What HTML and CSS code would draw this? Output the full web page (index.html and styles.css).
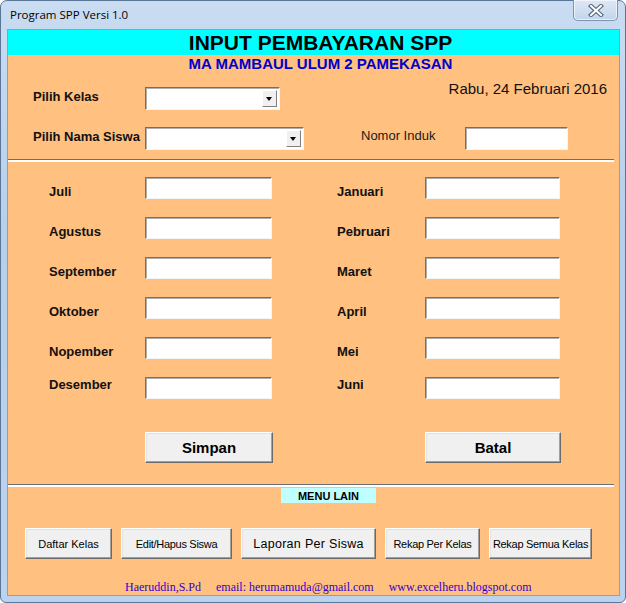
FILE: index.html
```html
<!DOCTYPE html>
<html lang="id">
<head>
  <meta charset="UTF-8">
  <title>Program SPP Versi 1.0</title>
  <link rel="stylesheet" href="styles.css">
</head>
<body>

  <div class="window">
    <div class="titlebar">
      <span class="title">Program SPP Versi 1.0</span>
      <button class="close-btn">
        <svg width="18" height="13" viewBox="0 0 18 13">
          <path d="M4 2 L14 11 M14 2 L4 11" stroke="#55657c" stroke-width="4.2" stroke-linecap="square"/>
          <path d="M4 2 L14 11 M14 2 L4 11" stroke="#ffffff" stroke-width="2" stroke-linecap="square"/>
        </svg>
      </button>
    </div>

    <div class="client">
      <div class="head">INPUT PEMBAYARAN SPP</div>

      <div class="top">
        <div class="subtitle">MA MAMBAUL ULUM 2 PAMEKASAN</div>
        <div class="row row-kelas">
          <label class="lbl">Pilih Kelas</label>
          <div class="combo combo-kelas"><span class="combo-btn"></span></div>
          <div class="date">Rabu, 24 Februari 2016</div>
        </div>
        <div class="row row-siswa">
          <label class="lbl">Pilih Nama Siswa</label>
          <div class="combo combo-siswa"><span class="combo-btn"></span></div>
          <span class="nomor">Nomor Induk</span>
          <div class="field field-nomor"></div>
        </div>
      </div>

      <div class="sep"></div>

      <div class="months">
        <label class="mlbl">Juli</label><div class="field field-l"></div><span></span>
        <label class="mlbl">Januari</label><div class="field field-r"></div>

        <label class="mlbl">Agustus</label><div class="field field-l"></div><span></span>
        <label class="mlbl">Pebruari</label><div class="field field-r"></div>

        <label class="mlbl">September</label><div class="field field-l"></div><span></span>
        <label class="mlbl">Maret</label><div class="field field-r"></div>

        <label class="mlbl">Oktober</label><div class="field field-l"></div><span></span>
        <label class="mlbl">April</label><div class="field field-r"></div>

        <label class="mlbl">Nopember</label><div class="field field-l"></div><span></span>
        <label class="mlbl">Mei</label><div class="field field-r"></div>

        <label class="mlbl up">Desember</label><div class="field field-l"></div><span></span>
        <label class="mlbl up">Juni</label><div class="field field-r"></div>
      </div>

      <div class="actions">
        <button class="btn btn-simpan">Simpan</button>
        <button class="btn btn-batal">Batal</button>
      </div>

      <div class="sep"></div>

      <div class="bottom">
        <div class="menu-lain">MENU LAIN</div>
        <div class="menu-btns">
          <button class="btn mbtn w-daftar">Daftar Kelas</button>
          <button class="btn mbtn w-edit">Edit/Hapus Siswa</button>
          <button class="btn mbtn w-laporan">Laporan Per Siswa</button>
          <button class="btn mbtn w-rekap">Rekap Per Kelas</button>
          <button class="btn mbtn w-semua">Rekap Semua Kelas</button>
        </div>
        <div class="footer">
          <span>Haeruddin,S.Pd</span>
          <span>email: herumamuda@gmail.com</span>
          <span>www.excelheru.blogspot.com</span>
        </div>
      </div>
    </div>
  </div>

</body>
</html>
```

FILE: styles.css
```css
* {
  box-sizing: border-box;
}
body, html {
  margin: 0;
  padding: 0;
  background: #ffffff;
  font-family: "Liberation Sans", Arial, sans-serif;
}

.window {
  width: 626px;
  height: 603px;
  border: 1px solid #5b7597;
  border-radius: 7px 7px 6px 6px;
  background: linear-gradient(to bottom, #c9dcf1 0%, #b6cfec 40%, #bcd3ef 100%);
  padding: 0 5px 6px 6px;
  display: flex;
  flex-direction: column;
}

.titlebar {
  height: 28px;
  display: flex;
  align-items: flex-start;
}
.title {
  font-family: "Open Sans", "Noto Sans", sans-serif;
  font-size: 11.5px;
  color: #000;
  padding: 6px 0 0 3px;
}
.close-btn {
  margin-left: auto;
  margin-right: 2px;
  margin-top: -1px;
  width: 45px;
  height: 21px;
  border: 1px solid #7d93b0;
  border-top: none;
  border-radius: 0 0 5px 5px;
  background: linear-gradient(to bottom, #dde8f5, #c4d5ea);
  box-shadow: inset 0 0 0 1px rgba(255,255,255,0.6);
  padding: 0;
  display: flex;
  align-items: center;
  justify-content: center;
}

.client {
  flex: 1;
  border: 1px solid #8aa0bb;
  background: #ffc080;
  display: flex;
  flex-direction: column;
}

.head {
  height: 25px;
  background: #00ffff;
  text-align: center;
  font-size: 21px;
  font-weight: bold;
  line-height: 26px;
  color: #000;
  padding-left: 14px;
}

.top {
  height: 104px;
}
.subtitle {
  height: 18px;
  line-height: 18px;
  text-align: center;
  font-size: 15px;
  font-weight: bold;
  color: #0000cc;
  padding-left: 14px;
}
.row {
  display: flex;
  align-items: flex-start;
  padding-left: 25px;
}
.row-kelas {
  margin-top: 3px;
}
.row-kelas .lbl,
.row-kelas .combo {
  margin-top: 11px;
}
.row-siswa {
  margin-top: 17px;
}
.lbl {
  width: 112px;
  font-size: 13px;
  font-weight: bold;
  line-height: 20px;
  color: #111;
}
.date {
  margin-left: auto;
  margin-right: 12px;
  margin-top: 3px;
  font-size: 15px;
  line-height: 20px;
  color: #111;
}
.nomor {
  margin-left: 57px;
  width: 104px;
  font-size: 13px;
  line-height: 18px;
  color: #1a1a1a;
}

.field, .combo {
  background: #ffffff;
  border: 1px solid;
  border-color: #707070 #f4f4f4 #f4f4f4 #707070;
  box-shadow: inset 1px 1px 0 #b0b0b0;
}
.combo {
  height: 23px;
  position: relative;
}
.combo-kelas { width: 135px; }
.combo-siswa { width: 159px; }
.combo-btn {
  position: absolute;
  right: 2px;
  top: 2px;
  width: 15px;
  height: 17px;
  background: #f0f0f0;
  border: 1px solid;
  border-color: #ffffff #808080 #808080 #ffffff;
}
.combo-btn::after {
  content: "";
  position: absolute;
  left: 3px;
  top: 6px;
  border-left: 3.5px solid transparent;
  border-right: 3.5px solid transparent;
  border-top: 4px solid #000;
}
.field-nomor {
  width: 103px;
  height: 23px;
}

.sep {
  height: 3px;
  border-top: 1px solid #6e6e6e;
  border-bottom: 2px solid #ffffff;
  margin-right: 5px;
  background: #a8a8a8;
}

.months {
  display: grid;
  grid-template-columns: 96px 127px 65px 88px 135px;
  grid-auto-rows: 22px;
  row-gap: 18px;
  padding: 15px 0 0 41px;
}
.mlbl {
  font-size: 13px;
  font-weight: bold;
  line-height: 16px;
  padding-top: 7px;
  color: #111;
}
.mlbl.up {
  padding-top: 0;
}
.field-l, .field-r {
  height: 22px;
}

.actions {
  margin-top: 33px;
  display: flex;
  height: 31px;
}
.btn {
  background: #f0f0f0;
  border: 1px solid;
  border-color: #ffffff #6a6a6a #6a6a6a #ffffff;
  box-shadow: inset -1px -1px 0 #a0a0a0, inset 1px 1px 0 #e3e3e3;
  font-family: "Liberation Sans", Arial, sans-serif;
  color: #000;
  padding: 0;
}
.btn-simpan, .btn-batal {
  font-size: 15px;
  font-weight: bold;
  height: 31px;
}
.btn-simpan {
  margin-left: 137px;
  width: 128px;
}
.btn-batal {
  margin-left: 152px;
  width: 136px;
}

.actions + .sep {
  margin-top: 21px;
}

.bottom {
  flex: 1;
}
.menu-lain {
  margin: 1px 0 0 273px;
  width: 95px;
  height: 15px;
  background: #c0ffff;
  text-align: center;
  font-size: 11px;
  font-weight: bold;
  line-height: 16px;
  color: #000;
}
.menu-btns {
  display: flex;
  gap: 9px;
  margin: 25px 0 0 17px;
}
.mbtn {
  height: 31px;
  font-size: 11px;
  letter-spacing: -0.3px;
  white-space: nowrap;
}
.w-daftar { width: 87px; letter-spacing: 0; }
.w-edit { width: 111px; }
.w-laporan { width: 135px; font-size: 12.5px; letter-spacing: 0.3px; }
.w-rekap { width: 95px; }
.w-semua { width: 103px; }

.footer {
  margin: 21px 0 0 117px;
  font-family: "Liberation Serif", "Times New Roman", serif;
  font-size: 12px;
  line-height: 14px;
  color: #3300cc;
  display: flex;
  gap: 15px;
}
```
